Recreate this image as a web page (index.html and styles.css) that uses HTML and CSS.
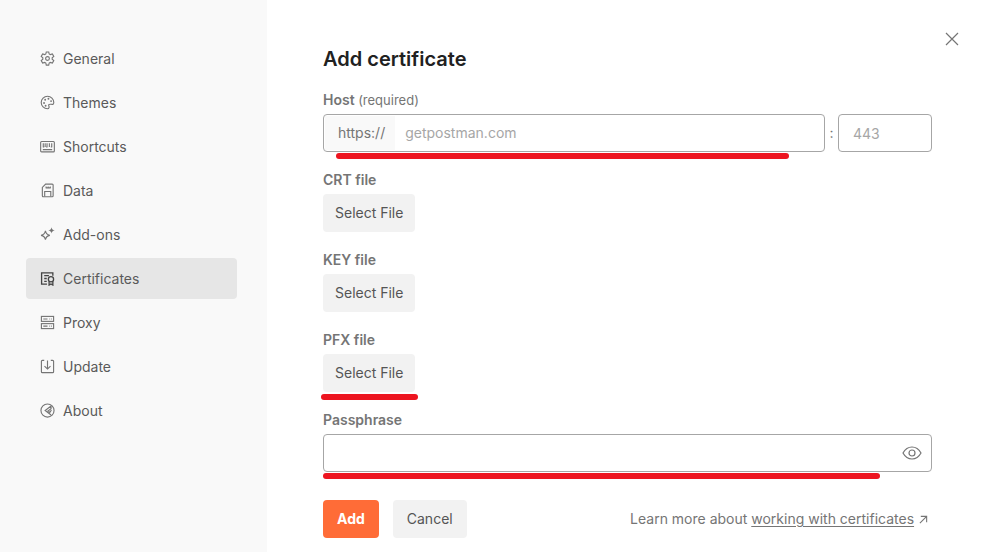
FILE: index.html
```html
<!DOCTYPE html>
<html lang="en">
<head>
    <meta charset="UTF-8">
    <meta name="viewport" content="width=device-width, initial-scale=1.0">
    <title>Settings - Add certificate</title>
    <link rel="stylesheet" href="styles.css">
</head>
<body>
    <div class="settings">
        <nav class="sidebar" aria-label="Settings">
            <a class="nav-item" href="#general">
                <svg class="icon" viewBox="0 0 16 16"><path d="M6.7 1h2.600l.5 2.200 1.200.7 2.200-.7 1.500 2.500L13 7.200v1.600l1.700 1.500-1.500 2.500-2.200-.7-1.200.7L9.300 15H6.700l-.5-2.200-1.200-.7-2.200.7-1.500-2.500L3 8.800V7.200L1.300 5.700l1.500-2.500 2.200.7 1.200-.7z"/><circle cx="8" cy="8" r="2"/></svg>
                <span>General</span>
            </a>
            <a class="nav-item" href="#themes">
                <svg class="icon" viewBox="0 0 16 16"><path d="M8 14.700A6.700 6.700 0 1 1 14.700 8c0 1.500-.8 2.200-2 2-1.500-.2-2.700-.5-3.300.3-.7 1 .6 1.700.3 2.900-.2.900-.8 1.500-1.700 1.500z"/><circle class="fill" cx="4.300" cy="8.500" r="1"/><circle class="fill" cx="5.500" cy="5" r="1"/><circle class="fill" cx="9" cy="4" r="1"/><circle class="fill" cx="11.800" cy="6.500" r="1"/><circle class="fill" cx="6" cy="11.500" r="1"/></svg>
                <span>Themes</span>
            </a>
            <a class="nav-item" href="#shortcuts">
                <svg class="icon" viewBox="0 0 16 16"><rect x=".7" y="2.700" width="14.600" height="11" rx="1"/><path d="M3.500 4.500v4M5.500 4.500v4M7.500 4.500v4M10 4.500v4M12.500 4.500v4M3 11.300h10M3 8.500h1.500M6.500 8.500H8M11.500 8.500H13"/></svg>
                <span>Shortcuts</span>
            </a>
            <a class="nav-item" href="#data">
                <svg class="icon" viewBox="0 0 16 16"><path d="M6 1.200h7a1 1 0 0 1 1 1v11.500a1 1 0 0 1-1 1H3.500a1 1 0 0 1-1-1V4.700z"/><path d="M5 14.500V9h6.500v5.500M6.500 5.200v-1.500M8.700 5.200v-1.500M11 5.200v-1.500M6 5.200h5.500"/></svg>
                <span>Data</span>
            </a>
            <a class="nav-item" href="#add-ons">
                <svg class="icon" viewBox="0 0 16 16"><path d="M5.800 4.200c.5 3 1.700 4.200 4.700 4.700-3 .5-4.200 1.700-4.700 4.700-.5-3-1.700-4.200-4.700-4.700 3-.5 4.200-1.700 4.700-4.700z"/><path class="fill" d="M12.300.2c.4 2.200 1.200 3 3.400 3.400-2.200.4-3 1.200-3.400 3.400-.4-2.200-1.200-3-3.400-3.400 2.200-.4 3-1.200 3.400-3.400z"/></svg>
                <span>Add-ons</span>
            </a>
            <a class="nav-item active" href="#certificates" aria-current="page">
                <svg class="icon" viewBox="0 0 16 16"><path d="M7.500 14H1.700V2h12v3M4.500 5h5M4.500 8h2.700M4.500 11h2.700"/><circle cx="11.700" cy="8.800" r="2.800"/><path d="M9.700 11.200v3.800l2-1.200 2 1.200v-3.800"/></svg>
                <span>Certificates</span>
            </a>
            <a class="nav-item" href="#proxy">
                <svg class="icon" viewBox="0 0 16 16"><rect x="1.500" y="1.500" width="13" height="5.300"/><rect x="1.500" y="9.200" width="13" height="5.300"/><path d="M3.500 4.200H8M10 4.200h.8M12 4.200h.8M3.500 11.800H8M10 11.800h.8M12 11.800h.8"/></svg>
                <span>Proxy</span>
            </a>
            <a class="nav-item" href="#update">
                <svg class="icon" viewBox="0 0 16 16"><path d="M4.500 1.500h-2a1 1 0 0 0-1 1v11a1 1 0 0 0 1 1h11a1 1 0 0 0 1-1v-11a1 1 0 0 0-1-1h-2M8 1.500v9M4.800 7.500 8 10.700l3.200-3.200"/></svg>
                <span>Update</span>
            </a>
            <a class="nav-item" href="#about">
                <svg class="icon" viewBox="0 0 16 16"><circle cx="8" cy="8" r="7"/><path d="M11.800 3.200 5.500 8l6.300 4.800M11.800 3.200V6L8.500 8.500l2 1.500 1.700-2.500"/></svg>
                <span>About</span>
            </a>
        </nav>

        <main class="content">
            <button class="close-btn" type="button" aria-label="Close">
                <svg viewBox="0 0 14 14"><path d="M1 1l12 12M13 1 1 13"/></svg>
            </button>

            <h1>Add certificate</h1>

            <form class="cert-form">
                <div class="field">
                    <label for="host">Host <span class="hint">(required)</span></label>
                    <div class="host-row">
                        <div class="host-box">
                            <span class="prefix">https://</span>
                            <input type="text" id="host" placeholder="getpostman.com">
                        </div>
                        <span class="colon">:</span>
                        <input class="port" type="text" placeholder="443" aria-label="Port">
                    </div>
                    <span class="mark mark-host"></span>
                </div>

                <div class="field">
                    <label for="crt">CRT file</label>
                    <button class="btn" type="button" id="crt">Select File</button>
                </div>

                <div class="field">
                    <label for="key">KEY file</label>
                    <button class="btn" type="button" id="key">Select File</button>
                </div>

                <div class="field">
                    <label for="pfx">PFX file</label>
                    <button class="btn" type="button" id="pfx">Select File</button>
                    <span class="mark mark-pfx"></span>
                </div>

                <div class="field">
                    <label for="passphrase">Passphrase</label>
                    <div class="pass-box">
                        <input type="password" id="passphrase">
                        <button class="eye-btn" type="button" aria-label="Show passphrase">
                            <svg viewBox="0 0 20 14"><path d="M1 7c2.200-4 5.200-6 9-6s6.800 2 9 6c-2.200 4-5.200 6-9 6s-6.800-2-9-6z"/><circle cx="10" cy="7" r="3"/></svg>
                        </button>
                    </div>
                    <span class="mark mark-pass"></span>
                </div>

                <div class="actions">
                    <button class="btn btn-primary" type="submit">Add</button>
                    <button class="btn" type="button">Cancel</button>
                    <p class="learn">
                        Learn more about <a href="#docs">working with certificates</a>
                        <svg viewBox="0 0 10 10"><path d="M1 9l7.500-7.500M2 1.500h6.500V8"/></svg>
                    </p>
                </div>
            </form>
        </main>
    </div>
</body>
</html>
```
FILE: styles.css
```css
* {
    box-sizing: border-box;
}

body {
    margin: 0;
    background: #fff;
    color: #757575;
    font-family: Inter, "Liberation Sans", sans-serif;
    font-size: 14px;
    line-height: 20px;
}

button,
input {
    font: inherit;
    color: inherit;
}

svg {
    fill: none;
    stroke: currentColor;
    stroke-width: 1.2px;
}

.settings {
    display: flex;
    min-height: 100vh;
}

/* Sidebar */
.sidebar {
    display: flex;
    flex-direction: column;
    gap: 3px;
    flex: 0 0 267px;
    padding: 38px 30px 0 26px;
    background: #f9f9f9;
}

.nav-item {
    display: flex;
    align-items: center;
    gap: 8px;
    height: 41px;
    padding: 0 14px;
    border-radius: 4px;
    color: #5a5a5a;
    text-decoration: none;
}

.nav-item.active {
    background: #e6e6e6;
}

.icon {
    width: 15px;
    height: 15px;
    color: #757575;
}

.active .icon {
    color: #444;
    stroke-width: 1.4px;
}

.icon .fill {
    fill: currentColor;
    stroke: none;
}

/* Content */
.content {
    position: relative;
    flex: 1;
    padding: 44px 52px 14px 56px;
}

.close-btn {
    position: absolute;
    top: 32px;
    right: 25px;
    display: flex;
    padding: 0;
    border: 0;
    background: none;
    cursor: pointer;
}

.close-btn svg {
    width: 14px;
    height: 14px;
}

h1 {
    margin: 0 0 16px;
    color: #212121;
    font-size: 20px;
    font-weight: 600;
    line-height: 30px;
}

.cert-form {
    display: flex;
    flex-direction: column;
    gap: 18px;
}

.field {
    position: relative;
    display: flex;
    flex-direction: column;
    align-items: flex-start;
    gap: 4px;
}

label {
    font-weight: 600;
}

.hint {
    font-size: 13px;
    font-weight: 400;
}

.host-row {
    display: flex;
    align-items: center;
    width: 100%;
}

.host-box,
.pass-box,
.port {
    height: 38px;
    border: 1px solid #a6a6a6;
    border-radius: 4px;
    background: #fff;
}

.host-box,
.pass-box {
    display: flex;
    align-items: stretch;
}

.host-box {
    flex: 1;
    padding: 1px;
}

.host-box input,
.pass-box input {
    flex: 1;
    min-width: 0;
    padding: 0 10px;
    border: 0;
    background: none;
    outline: none;
}

.prefix {
    display: flex;
    align-items: center;
    padding: 0 10px 0 13px;
    background: #f9f9f9;
}

.colon {
    width: 13px;
    text-align: center;
}

.port {
    width: 94px;
    padding: 0 14px;
}

input::placeholder {
    color: #a6a6a6;
    opacity: 1;
}

.pass-box {
    width: 100%;
}

.eye-btn {
    display: flex;
    align-items: center;
    padding: 0 9px;
    border: 0;
    background: none;
    cursor: pointer;
}

.eye-btn svg {
    width: 20px;
    height: 14px;
}

.btn {
    height: 38px;
    padding: 0 12px;
    border: 0;
    border-radius: 4px;
    background: #f2f2f2;
    color: #555;
    cursor: pointer;
}

.actions {
    display: flex;
    align-items: center;
    gap: 14px;
    margin-top: 10px;
}

.actions .btn {
    padding: 0 14px;
}

.actions .btn-primary {
    background: #ff6c37;
    color: #fff;
    font-weight: 700;
}

.learn {
    margin: 0 4px 0 auto;
}

.learn a {
    color: inherit;
    text-underline-offset: 2px;
}

.learn svg {
    width: 9px;
    height: 9px;
    margin-left: 1px;
}

/* Red underlines drawn over the form */
.mark {
    position: absolute;
    height: 6px;
    border-radius: 3px;
    background: #ed1520;
}

.mark-host {
    top: 63px;
    left: 13px;
    right: 143px;
}

.mark-pfx {
    top: 64px;
    left: -2px;
    width: 97px;
}

.mark-pass {
    top: 63px;
    left: 0;
    right: 52px;
}
```
